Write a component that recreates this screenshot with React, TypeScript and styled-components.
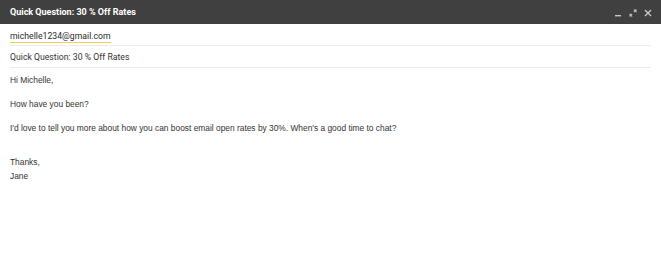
import React from 'react';
import styled, { createGlobalStyle } from 'styled-components';

const GlobalStyle = createGlobalStyle`
  html, body {
    margin: 0;
    padding: 0;
    background: #fff;
  }
  body {
    font-family: Roboto, "Liberation Sans", sans-serif;
  }
`;

const Window = styled.div`
  width: 661px;
  height: 257px;
  display: flex;
  flex-direction: column;
  background: #fff;
  overflow: hidden;
`;

const TitleBar = styled.div`
  height: 24px;
  background: #404040;
  display: flex;
  align-items: center;
  justify-content: space-between;
  padding: 0 9px 0 10px;
`;

const Title = styled.div`
  color: #fff;
  font-family: Roboto, sans-serif;
  font-weight: 700;
  font-size: 9px;
`;

const Controls = styled.div`
  display: flex;
  align-items: center;
  gap: 7px;
  padding-top: 2px;
`;

const ControlButton = styled.button`
  width: 8px;
  height: 8px;
  padding: 0;
  border: none;
  background: none;
  display: flex;
  align-items: center;
  justify-content: center;
  color: #c8c8c8;
`;

const Fields = styled.div`
  padding: 0 10px;
`;

const FieldRow = styled.div`
  height: 21px;
  border-bottom: 1px solid #ececec;
  display: flex;
  align-items: center;
`;

const Recipient = styled.span`
  font-family: Roboto, sans-serif;
  font-size: 8.7px;
  color: #2a2a2a;
  border-bottom: 1px solid #f6cd5e;
  line-height: 12px;
  margin-top: 3px;
`;

const Subject = styled.span`
  font-family: Roboto, sans-serif;
  font-size: 8.7px;
  color: #333;
`;

const Body = styled.div`
  padding: 6px 10px;
  font-family: "Liberation Sans", Arial, sans-serif;
  font-size: 8.4px;
  color: #333;
  line-height: 12.5px;
`;

const Para = styled.p<{ $gap?: number }>`
  margin: 0 0 ${p => p.$gap ?? 11.5}px;
`;

const Signature = styled.p`
  margin: 0;
  line-height: 14px;
`;

const App: React.FC = () => (
  <>
    <GlobalStyle />
    <Window>
      <TitleBar>
        <Title>Quick Question: 30 % Off Rates</Title>
        <Controls>
          <ControlButton aria-label="Minimize">
            <svg width="8" height="8" viewBox="0 0 8 8">
              <rect x="1" y="6" width="6" height="1.4" fill="currentColor" />
            </svg>
          </ControlButton>
          <ControlButton aria-label="Full screen">
            <svg width="8" height="8" viewBox="0 0 8 8">
              <path d="M4.3 0.5 H7.5 V3.7 Z M3.7 7.5 H0.5 V4.3 Z" fill="currentColor" />
              <path d="M6.2 1.8 L4.9 3.1 M1.8 6.2 L3.1 4.9" stroke="currentColor" strokeWidth="1.1" />
            </svg>
          </ControlButton>
          <ControlButton aria-label="Close">
            <svg width="8" height="8" viewBox="0 0 8 8">
              <path d="M1 1 L7 7 M7 1 L1 7" stroke="currentColor" strokeWidth="1.4" />
            </svg>
          </ControlButton>
        </Controls>
      </TitleBar>
      <Fields>
        <FieldRow>
          <Recipient>michelle1234@gmail.com</Recipient>
        </FieldRow>
        <FieldRow>
          <Subject>Quick Question: 30 % Off Rates</Subject>
        </FieldRow>
      </Fields>
      <Body>
        <Para>Hi Michelle,</Para>
        <Para>How have you been?</Para>
        <Para $gap={20}>
          I'd love to tell you more about how you can boost email open rates by 30%. When's a good time to chat?
        </Para>
        <Signature>
          Thanks,
          <br />
          Jane
        </Signature>
      </Body>
    </Window>
  </>
);

export default App;
